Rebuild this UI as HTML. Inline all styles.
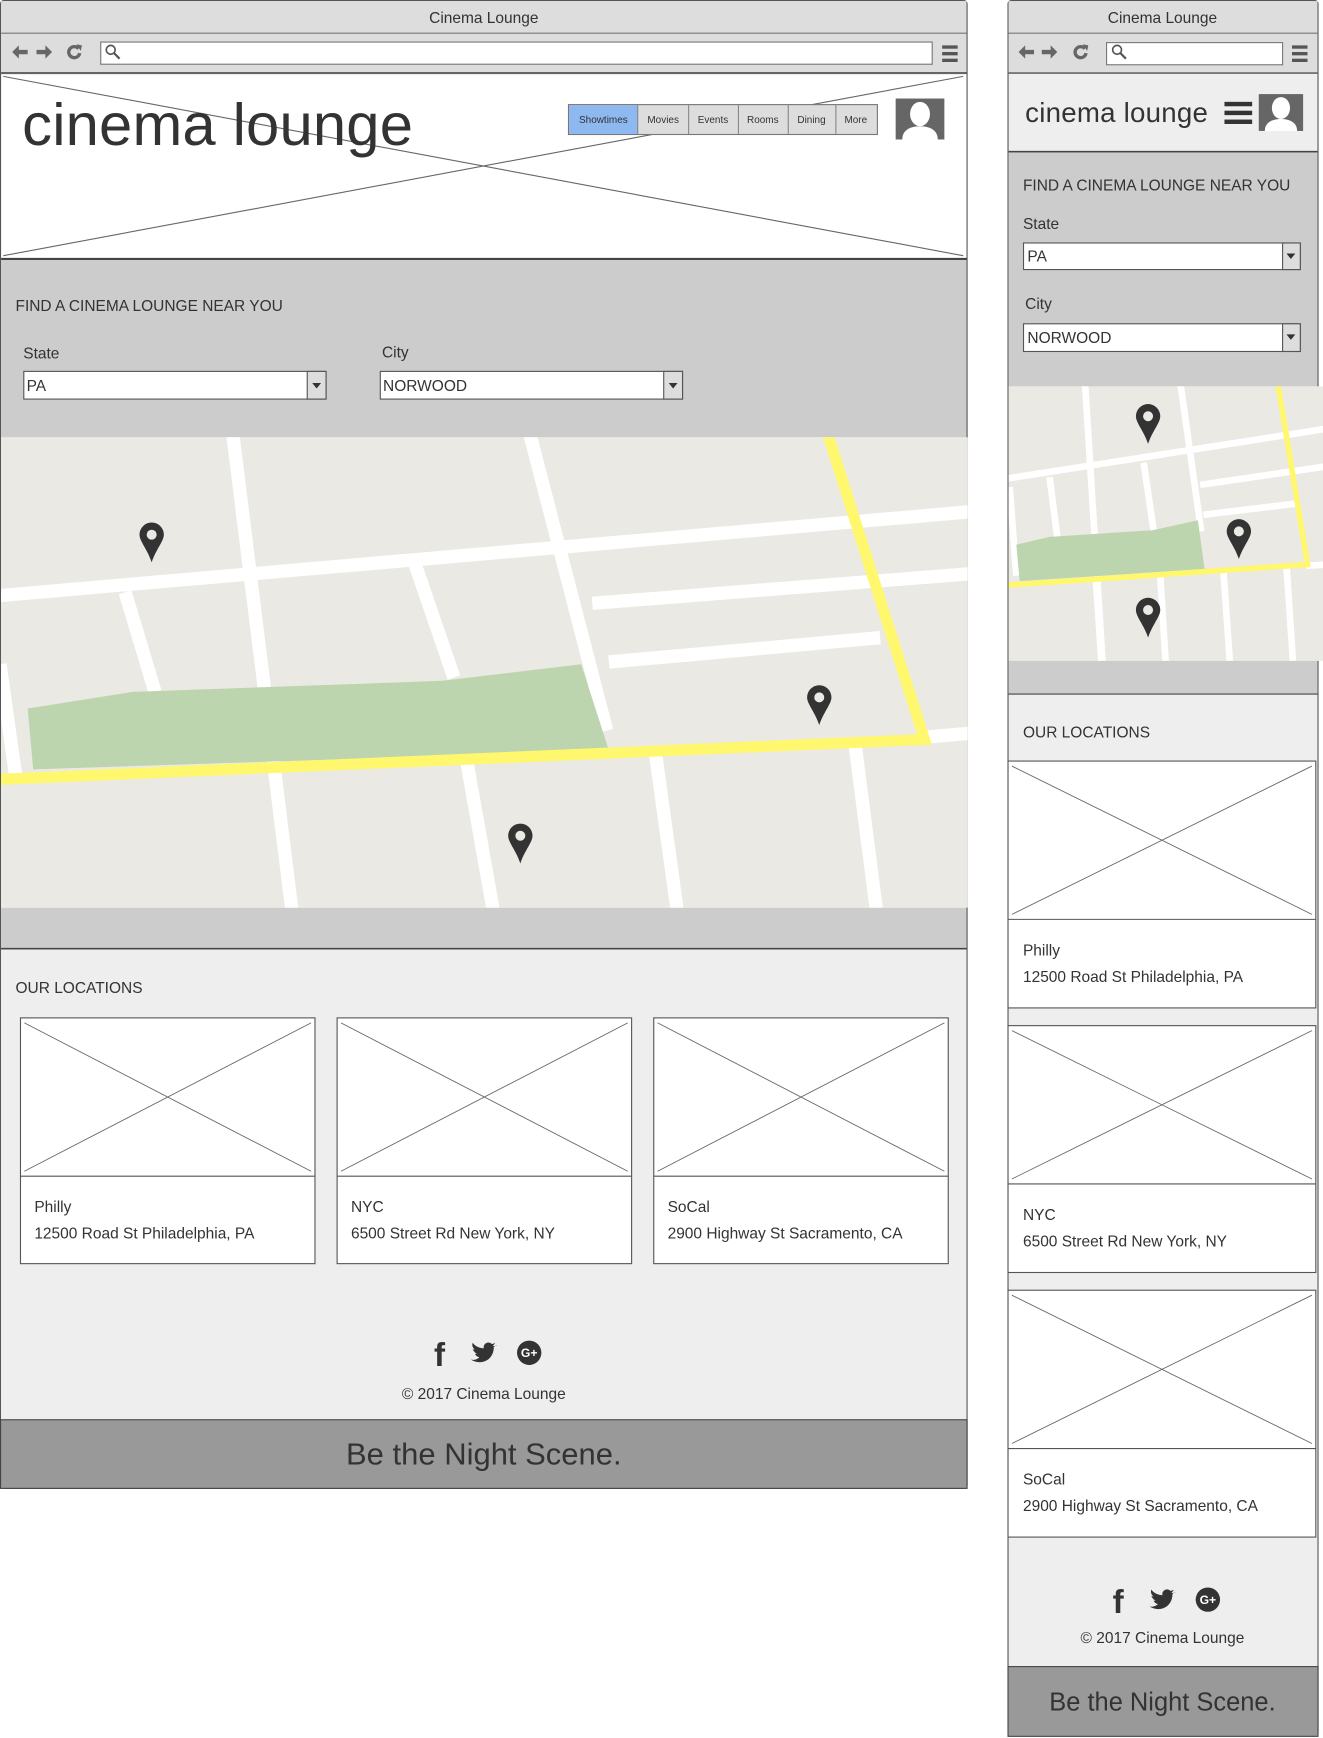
<!DOCTYPE html>
<html><head><meta charset="utf-8"><style>html,body{margin:0;padding:0;background:#fff}svg{display:block}text{font-family:"Liberation Sans",sans-serif;fill:#333}text.w{fill:#fff}</style></head>
<body>
<svg width="1323" height="1738" viewBox="0 0 1195 1570" preserveAspectRatio="none" xmlns="http://www.w3.org/2000/svg">
<defs>
<g id="pin"><path d="M0,-11 a11,11 0 0 1 11,11 c0,6 -7,13 -11,25 c-4,-12 -11,-19 -11,-25 a11,11 0 0 1 11,-11z" fill="#333"/><circle r="4.5" fill="#ebe9e3"/></g>
<g id="avatar"><rect x="0" y="0" width="44" height="37" fill="#666"/><ellipse cx="22" cy="14" rx="9" ry="11" fill="#fff"/><path d="M6,37 C6,28 14,25 22,25 C30,25 38,28 38,37 Z" fill="#fff"/></g>
<g id="hamb"><rect x="0" y="0" width="14" height="3" fill="#555"/><rect x="0" y="6" width="14" height="3" fill="#555"/><rect x="0" y="12" width="14" height="3" fill="#555"/></g>
<g id="nav"><path d="M-3,-6 l-6,6 6,6 v-4 h8 v-4 h-8z" fill="#666"/></g>
</defs>

<!-- ============ DESKTOP ============ -->
<rect x="0.5" y="0.5" width="873" height="1344" fill="#fff" stroke="#555" rx="3"/>
<rect x="1" y="1" width="872" height="65" fill="#ddd"/>
<text x="437" y="21" font-size="14" text-anchor="middle">Cinema Lounge</text>
<line x1="1" y1="30" x2="873" y2="30" stroke="#777"/>
<line x1="1" y1="66" x2="873" y2="66" stroke="#666" stroke-width="2"/>
<use href="#nav" x="20" y="47"/>
<use href="#nav" transform="translate(38,47) scale(-1,1)"/>
<path d="M71,44 A5,5 0 1 0 72,48" fill="none" stroke="#666" stroke-width="3"/><path d="M69,40 l5,1 -1,5z" fill="#666"/>
<rect x="91" y="38" width="751" height="20" fill="#fff" stroke="#777"/>
<circle cx="100" cy="45" r="4" fill="none" stroke="#555" stroke-width="1.5"/><line x1="103" y1="48" x2="108" y2="53" stroke="#555" stroke-width="2"/>
<use href="#hamb" x="851" y="41"/>
<!-- header -->
<line x1="3" y1="69" x2="870" y2="231" stroke="#666" stroke-width="1"/>
<line x1="3" y1="231" x2="870" y2="69" stroke="#666" stroke-width="1"/>
<text x="20" y="131" font-size="54" fill="#2c2c2c" textLength="353">cinema lounge</text>
<rect x="513.5" y="94.5" width="279" height="27" fill="#ddd" stroke="#777"/>
<rect x="514" y="95" width="62" height="26" fill="#8db8f0"/>
<g stroke="#888"><line x1="576" y1="95" x2="576" y2="121"/><line x1="622" y1="95" x2="622" y2="121"/><line x1="667" y1="95" x2="667" y2="121"/><line x1="712" y1="95" x2="712" y2="121"/><line x1="755" y1="95" x2="755" y2="121"/></g>
<g font-size="9" text-anchor="middle"><text x="545" y="111">Showtimes</text><text x="599" y="111">Movies</text><text x="644" y="111">Events</text><text x="689" y="111">Rooms</text><text x="733" y="111">Dining</text><text x="773" y="111">More</text></g>
<use href="#avatar" x="809" y="89"/>
<line x1="1" y1="234" x2="873" y2="234" stroke="#444" stroke-width="2"/>
<!-- find -->
<rect x="1" y="235" width="872" height="160" fill="#ccc"/>
<text x="14" y="281" font-size="14">FIND A CINEMA LOUNGE NEAR YOU</text>
<text x="21" y="324" font-size="14">State</text>
<text x="345" y="323" font-size="14">City</text>
<rect x="21.5" y="335.5" width="273" height="25" fill="#fff" stroke="#555"/>
<rect x="277.5" y="335.5" width="17" height="25" fill="#ddd" stroke="#555"/>
<path d="M282,346 h8 l-4,5z" fill="#333"/>
<text x="24" y="353" font-size="14">PA</text>
<rect x="343.5" y="335.5" width="273" height="25" fill="#fff" stroke="#555"/>
<rect x="599.5" y="335.5" width="17" height="25" fill="#ddd" stroke="#555"/>
<path d="M604,346 h8 l-4,5z" fill="#333"/>
<text x="346" y="353" font-size="14">NORWOOD</text>
<!-- map -->
<svg x="1" y="395" width="873" height="425" viewBox="1 395 873 425" overflow="hidden">
<rect x="0" y="395" width="874" height="425" fill="#ebe9e3"/>
<g stroke="#fff" stroke-width="12" fill="none">
<line x1="210" y1="390" x2="264" y2="825"/>
<line x1="478" y1="390" x2="548" y2="660"/>
<line x1="113" y1="535" x2="140" y2="625"/>
<line x1="375" y1="510" x2="410" y2="612"/>
<line x1="0" y1="600" x2="14" y2="700"/>
<line x1="422" y1="690" x2="446" y2="825"/>
<line x1="592" y1="680" x2="612" y2="825"/>
<line x1="772" y1="670" x2="792" y2="825"/>
<line x1="0" y1="538" x2="880" y2="462"/>
<line x1="535" y1="545" x2="880" y2="518"/>
<line x1="550" y1="598" x2="795" y2="576"/>
<line x1="835" y1="666" x2="880" y2="662"/>
</g>
<path d="M25,640 L120,625 L400,615 L525,600 L550,678 L30,695Z" fill="#bdd5ae"/>
<polyline points="747,390 835,668 0,704" fill="none" stroke="#fff86e" stroke-width="10"/>
<use href="#pin" x="137" y="483"/>
<use href="#pin" x="740" y="630"/>
<use href="#pin" x="470" y="755"/>
</svg>
<rect x="1" y="820" width="872" height="37" fill="#ccc"/>
<line x1="1" y1="857" x2="873" y2="857" stroke="#444" stroke-width="1.5"/>
<!-- locations -->
<rect x="1" y="858" width="872" height="424" fill="#eee"/>
<text x="14" y="897" font-size="14">OUR LOCATIONS</text>
<g id="card">
<rect x="18.5" y="919.5" width="266" height="222" fill="#fff" stroke="#555"/>
<line x1="18.5" y1="1062.5" x2="284.5" y2="1062.5" stroke="#555"/>
<line x1="22" y1="924" x2="281" y2="1058" stroke="#666" stroke-width="0.8"/>
<line x1="22" y1="1058" x2="281" y2="924" stroke="#666" stroke-width="0.8"/>
</g>
<use href="#card" x="286"/>
<use href="#card" x="572"/>
<g font-size="14"><text x="31" y="1095">Philly</text><text x="31" y="1119">12500 Road St Philadelphia, PA</text>
<text x="317" y="1095">NYC</text><text x="317" y="1119">6500 Street Rd New York, NY</text>
<text x="603" y="1095">SoCal</text><text x="603" y="1119">2900 Highway St Sacramento, CA</text></g>
<g id="social">
<text x="397" y="1234" font-size="30" font-weight="bold" text-anchor="middle">f</text>
<path d="M449,1215 c-1,1 -3,1 -4,1 c1,-1 2,-2 2,-3 c-1,1 -2,1 -3,1 c-3,-3 -8,0 -7,4 c-4,0 -8,-2 -10,-5 c-1,2 0,5 2,6 c-1,0 -2,0 -2,-1 c0,2 2,4 4,5 c-1,0 -2,0 -2,0 c1,2 3,3 4,3 c-2,2 -5,3 -8,2 c9,6 21,1 21,-11 c1,-1 2,-2 3,-2z" fill="#333"/>
<circle cx="478" cy="1222" r="11" fill="#333"/>
<text class="w" x="478" y="1226" font-size="11" font-weight="bold" text-anchor="middle">G+</text>
</g>
<text x="437" y="1264" font-size="14" text-anchor="middle">© 2017 Cinema Lounge</text>
<rect x="0.5" y="1282.5" width="873" height="62" fill="#999" stroke="#444"/>
<text x="437" y="1323" font-size="28" text-anchor="middle">Be the Night Scene.</text>

<!-- ============ MOBILE ============ -->
<rect x="910.5" y="0.5" width="280" height="1567" fill="#eee" stroke="#555" rx="3"/>
<rect x="911" y="1" width="279" height="65" fill="#ddd"/>
<text x="1050" y="21" font-size="14" text-anchor="middle">Cinema Lounge</text>
<line x1="911" y1="30" x2="1190" y2="30" stroke="#777"/>
<line x1="911" y1="66" x2="1190" y2="66" stroke="#666" stroke-width="1.5"/>
<use href="#nav" x="929" y="47"/>
<use href="#nav" transform="translate(946,47) scale(-1,1)"/>
<path d="M980,44 A5,5 0 1 0 981,48" fill="none" stroke="#666" stroke-width="3"/><path d="M978,40 l5,1 -1,5z" fill="#666"/>
<rect x="999.5" y="38.5" width="159" height="20" fill="#fff" stroke="#777"/>
<circle cx="1009" cy="45" r="4" fill="none" stroke="#555" stroke-width="1.5"/><line x1="1012" y1="48" x2="1017" y2="53" stroke="#555" stroke-width="2"/>
<use href="#hamb" x="1167" y="41"/>
<text x="926" y="110" font-size="25" fill="#2c2c2c" textLength="165">cinema lounge</text>
<rect x="1106" y="92" width="25" height="4" fill="#333"/><rect x="1106" y="100" width="25" height="4" fill="#333"/><rect x="1106" y="108" width="25" height="4" fill="#333"/>
<use href="#avatar" transform="translate(1137,85) scale(0.91,0.9)"/>
<line x1="911" y1="137" x2="1190" y2="137" stroke="#444" stroke-width="1.5"/>
<rect x="911" y="138" width="279" height="211" fill="#ccc"/>
<text x="924" y="172" font-size="14">FIND A CINEMA LOUNGE NEAR YOU</text>
<text x="924" y="207" font-size="14">State</text>
<rect x="924.5" y="219.5" width="250" height="24" fill="#fff" stroke="#555"/>
<rect x="1158.5" y="219.5" width="16" height="24" fill="#ddd" stroke="#555"/>
<path d="M1162,229 h8 l-4,5z" fill="#333"/>
<text x="928" y="236" font-size="14">PA</text>
<text x="926" y="279" font-size="14">City</text>
<rect x="924.5" y="292.5" width="250" height="25" fill="#fff" stroke="#555"/>
<rect x="1158.5" y="292.5" width="16" height="25" fill="#ddd" stroke="#555"/>
<path d="M1162,302 h8 l-4,5z" fill="#333"/>
<text x="928" y="310" font-size="14">NORWOOD</text>
<svg x="911" y="349" width="284" height="248" viewBox="911 349 284 248" overflow="hidden">
<rect x="900" y="340" width="300" height="260" fill="#ebe9e3"/>
<g stroke="#fff" stroke-width="6" fill="none">
<line x1="980" y1="345" x2="996" y2="600"/>
<line x1="1066" y1="345" x2="1085" y2="480"/>
<line x1="948" y1="431" x2="955" y2="485"/>
<line x1="1033" y1="418" x2="1042" y2="479"/>
<line x1="912" y1="440" x2="918" y2="520"/>
<line x1="990" y1="525" x2="995" y2="600"/>
<line x1="1048" y1="520" x2="1053" y2="600"/>
<line x1="1105" y1="515" x2="1111" y2="600"/>
<line x1="1162" y1="510" x2="1168" y2="600"/>
<line x1="905" y1="433" x2="1200" y2="387"/>
<line x1="1084" y1="438" x2="1200" y2="421"/>
<line x1="1087" y1="465" x2="1170" y2="455"/>
<line x1="1180" y1="511" x2="1200" y2="510"/>
</g>
<path d="M918,492 L948,485 L1041,479 L1082,470 L1088,514 L921,525Z" fill="#bdd5ae"/>
<polyline points="1154,345 1181,510 905,529" fill="none" stroke="#fff86e" stroke-width="5"/>
<use href="#pin" x="1037" y="376"/>
<use href="#pin" x="1119" y="480"/>
<use href="#pin" x="1037" y="551"/>
</svg>
<rect x="911" y="597" width="279" height="30" fill="#ccc"/>
<line x1="911" y1="627" x2="1190" y2="627" stroke="#444" stroke-width="1"/>
<text x="924" y="666" font-size="14">OUR LOCATIONS</text>
<g id="mcard">
<rect x="910.5" y="687.5" width="278" height="223" fill="#fff" stroke="#555"/>
<line x1="910.5" y1="830.5" x2="1188.5" y2="830.5" stroke="#555"/>
<line x1="914" y1="692" x2="1185" y2="826" stroke="#666" stroke-width="0.8"/>
<line x1="914" y1="826" x2="1185" y2="692" stroke="#666" stroke-width="0.8"/>
</g>
<use href="#mcard" y="239"/>
<use href="#mcard" y="478"/>
<g font-size="14"><text x="924" y="863">Philly</text><text x="924" y="887">12500 Road St Philadelphia, PA</text>
<text x="924" y="1102">NYC</text><text x="924" y="1126">6500 Street Rd New York, NY</text>
<text x="924" y="1341">SoCal</text><text x="924" y="1365">2900 Highway St Sacramento, CA</text></g>
<use href="#social" x="613" y="223"/>
<text x="1050" y="1484" font-size="14" text-anchor="middle">© 2017 Cinema Lounge</text>
<rect x="910.5" y="1505.5" width="280" height="63" fill="#999" stroke="#444"/>
<text x="1050" y="1545" font-size="23" text-anchor="middle">Be the Night Scene.</text>
</svg>
</body></html>
